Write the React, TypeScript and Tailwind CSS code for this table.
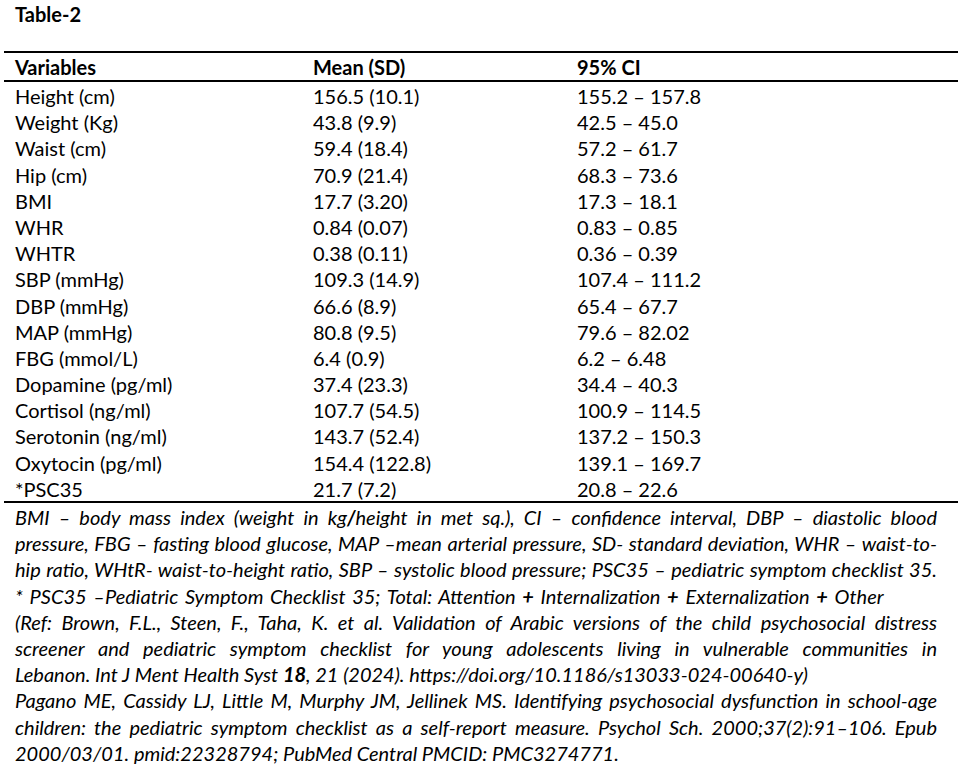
import React from "react";

interface Row {
  name: string;
  mean: string;
  ci: string;
}

const rows: Row[] = [
  { name: "Height (cm)", mean: "156.5 (10.1)", ci: "155.2 – 157.8" },
  { name: "Weight (Kg)", mean: "43.8 (9.9)", ci: "42.5 – 45.0" },
  { name: "Waist (cm)", mean: "59.4 (18.4)", ci: "57.2 – 61.7" },
  { name: "Hip (cm)", mean: "70.9 (21.4)", ci: "68.3 – 73.6" },
  { name: "BMI", mean: "17.7 (3.20)", ci: "17.3 – 18.1" },
  { name: "WHR", mean: "0.84 (0.07)", ci: "0.83 – 0.85" },
  { name: "WHTR", mean: "0.38 (0.11)", ci: "0.36 – 0.39" },
  { name: "SBP (mmHg)", mean: "109.3 (14.9)", ci: "107.4 – 111.2" },
  { name: "DBP (mmHg)", mean: "66.6 (8.9)", ci: "65.4 – 67.7" },
  { name: "MAP (mmHg)", mean: "80.8 (9.5)", ci: "79.6 – 82.02" },
  { name: "FBG (mmol/L)", mean: "6.4 (0.9)", ci: "6.2 – 6.48" },
  { name: "Dopamine (pg/ml)", mean: "37.4 (23.3)", ci: "34.4 – 40.3" },
  { name: "Cortisol (ng/ml)", mean: "107.7 (54.5)", ci: "100.9 – 114.5" },
  { name: "Serotonin (ng/ml)", mean: "143.7 (52.4)", ci: "137.2 – 150.3" },
  { name: "Oxytocin (pg/ml)", mean: "154.4 (122.8)", ci: "139.1 – 169.7" },
  { name: "*PSC35", mean: "21.7 (7.2)", ci: "20.8 – 22.6" },
];

const Line: React.FC<{ justify?: boolean; className?: string; children: React.ReactNode }> = ({
  justify,
  className = "",
  children,
}) => (
  <div
    className={
      (justify
        ? "h-[26.2px] leading-[26px] text-justify [text-align-last:justify] "
        : "h-[26.2px] leading-[26px] ") + className
    }
  >
    {children}
  </div>
);

const App: React.FC = () => {
  return (
    <div className="w-[959px] h-[767px] overflow-hidden bg-white text-black font-['Lato',sans-serif] text-[20px]">
      {/* title */}
      <div className="pl-[15px] pt-px h-[27px] leading-[26px] font-bold">Table-2</div>

      {/* table */}
      <div className="mt-[24px] ml-[4px] w-[954px] border-t-2 border-b-2 border-black">
        <div className="grid grid-cols-[298px_264px_1fr] pl-[11px] h-[26px] leading-[26px] font-bold border-b-2 border-black box-content pt-px">
          <div>Variables</div>
          <div>Mean (SD)</div>
          <div>95% CI</div>
        </div>
        {rows.map((r) => (
          <div key={r.name} className="grid grid-cols-[298px_264px_1fr] pl-[11px] pt-[2px] h-[26.2px] leading-[24px]">
            <div>{r.name}</div>
            <div>{r.mean}</div>
            <div>{r.ci}</div>
          </div>
        ))}
      </div>

      {/* footnotes */}
      <div className="mt-px ml-[15px] w-[922px] italic">
        <Line justify>
          BMI – body mass index (weight in kg<b>/</b>height in met sq.), CI – confidence interval, DBP – diastolic blood
        </Line>
        <Line justify>
          pressure, FBG – fasting blood glucose, MAP –mean arterial pressure, SD- standard deviation, WHR – waist-to-
        </Line>
        <Line justify>
          hip ratio, WHtR- waist-to-height ratio, SBP – systolic blood pressure; PSC35 – pediatric symptom checklist 35.
        </Line>
        <Line className="[word-spacing:2px]">
          * PSC35 –Pediatric Symptom Checklist 35; Total: Attention <b>+</b> Internalization <b>+</b> Externalization{" "}
          <b>+</b> Other
        </Line>
        <Line justify>
          (Ref: Brown, F.L., Steen, F., Taha, K. et al. Validation of Arabic versions of the child psychosocial distress
        </Line>
        <Line justify>
          screener and pediatric symptom checklist for young adolescents living in vulnerable communities in
        </Line>
        <Line>
          Lebanon. Int J Ment Health Syst <b>18</b>, 21 (2024). https://doi.org/10.1186/s13033-024-00640-y)
        </Line>
        <Line justify>
          Pagano ME, Cassidy LJ, Little M, Murphy JM, Jellinek MS. Identifying psychosocial dysfunction in school-age
        </Line>
        <Line justify>
          children: the pediatric symptom checklist as a self-report measure. Psychol Sch. 2000;37(2):91–106. Epub
        </Line>
        <Line>2000/03/01. pmid:22328794; PubMed Central PMCID: PMC3274771.</Line>
      </div>
    </div>
  );
};

export default App;
